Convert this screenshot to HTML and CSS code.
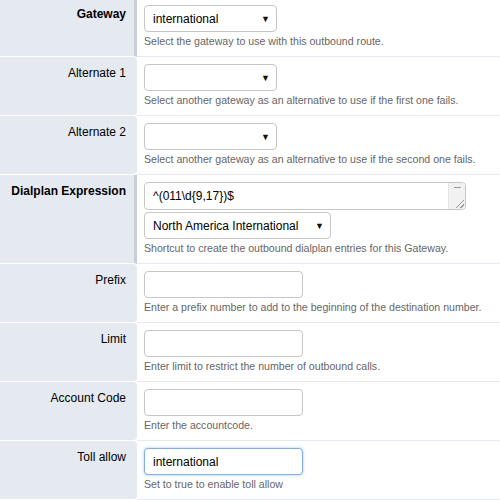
FILE: index.html
```html
<!DOCTYPE html>
<html>
<head>
<meta charset="utf-8">
<link rel="stylesheet" href="styles.css">
</head>
<body>
<div class="page">
<table class="form">
  <tr>
    <td class="label req">Gateway</td>
    <td class="field">
      <span class="sel w133"><span class="val">international</span><span class="arrow">&#9660;</span></span>
      <div class="desc">Select the gateway to use with this outbound route.</div>
    </td>
  </tr>
  <tr>
    <td class="label">Alternate 1</td>
    <td class="field">
      <span class="sel w133"><span class="val"></span><span class="arrow">&#9660;</span></span>
      <div class="desc">Select another gateway as an alternative to use if the first one fails.</div>
    </td>
  </tr>
  <tr>
    <td class="label">Alternate 2</td>
    <td class="field">
      <span class="sel w133"><span class="val"></span><span class="arrow">&#9660;</span></span>
      <div class="desc">Select another gateway as an alternative to use if the second one fails.</div>
    </td>
  </tr>
  <tr>
    <td class="label req">Dialplan Expression</td>
    <td class="field">
      <div class="ta">
        <span class="ta-text">^(011\d{9,17})$</span>
        <span class="ta-bar"><span class="ta-spin"></span><span class="ta-grip"></span></span>
      </div>
      <span class="sel w187"><span class="val">North America International</span><span class="arrow">&#9660;</span></span>
      <div class="desc">Shortcut to create the outbound dialplan entries for this Gateway.</div>
    </td>
  </tr>
  <tr>
    <td class="label">Prefix</td>
    <td class="field">
      <span class="inp"></span>
      <div class="desc">Enter a prefix number to add to the beginning of the destination number.</div>
    </td>
  </tr>
  <tr>
    <td class="label">Limit</td>
    <td class="field">
      <span class="inp"></span>
      <div class="desc">Enter limit to restrict the number of outbound calls.</div>
    </td>
  </tr>
  <tr>
    <td class="label">Account Code</td>
    <td class="field">
      <span class="inp"></span>
      <div class="desc">Enter the accountcode.</div>
    </td>
  </tr>
  <tr>
    <td class="label">Toll allow</td>
    <td class="field">
      <span class="inp focus">international</span>
      <div class="desc">Set to true to enable toll allow</div>
    </td>
  </tr>
</table>
</div>
</body>
</html>
```
FILE: styles.css
```css
html, body {
  margin: 0;
  padding: 0;
  background: #fff;
}
body {
  font-family: "Liberation Sans", Arial, sans-serif;
  font-size: 12px;
  color: #000;
}
.page {
  margin-top: -2px;
}
.form {
  border-collapse: separate;
  border-spacing: 0;
  width: 500px;
}
.label {
  width: 126px;
  background: #e5e9f0;
  text-align: right;
  vertical-align: top;
  padding: 8px 11px 0 0;
  border-bottom: 1px solid #fff;
  border-radius: 0 4px 4px 0;
  line-height: 16px;
  white-space: nowrap;
}
.label.req {
  font-weight: bold;
  width: 126px;
  padding-right: 8px;
  border-right: 3px solid #c9ced6;
  border-radius: 0;
}
.field {
  vertical-align: top;
  padding: 7px 0 7px 7px;
  border-bottom: 1px solid #e5e9f0;
}
.sel, .inp {
  display: flex;
  align-items: center;
  box-sizing: border-box;
  height: 27px;
  border: 1px solid #c6c6c6;
  border-radius: 4px;
  background: #fff;
  padding: 0 6px 0 8px;
  font-size: 12px;
}
.w133 { width: 133px; }
.w187 { width: 187px; }
.sel .val {
  flex: 1;
  white-space: nowrap;
}
.sel .arrow {
  font-size: 9px;
  color: #111;
}
.inp {
  width: 159px;
}
.inp.focus {
  border-color: #7fb0e8;
  box-shadow: 0 0 3px rgba(102, 160, 230, 0.6);
}
.ta {
  display: flex;
  box-sizing: border-box;
  width: 322px;
  height: 28px;
  border: 1px solid #c6c6c6;
  border-radius: 4px;
  margin-bottom: 2px;
  overflow: hidden;
}
.ta-text {
  flex: 1;
  padding: 6px 8px;
  line-height: 14px;
}
.ta-bar {
  width: 16px;
  background: #f1f1f1;
  border-left: 1px solid #e4e4e4;
  display: flex;
  flex-direction: column;
  justify-content: space-between;
  align-items: center;
}
.ta-spin {
  margin-top: 4px;
  width: 7px;
  height: 5px;
  border-top: 1px solid #999;
}
.ta-grip {
  width: 8px;
  height: 8px;
  margin-left: 6px;
  margin-bottom: 1px;
  background: linear-gradient(135deg, transparent 45%, #999 45%, #999 55%, transparent 55%, transparent 72%, #999 72%, #999 82%, transparent 82%);
}
.desc {
  color: #666;
  font-size: 10.6px;
  line-height: 16px;
  padding-top: 1px;
  white-space: nowrap;
}
```
